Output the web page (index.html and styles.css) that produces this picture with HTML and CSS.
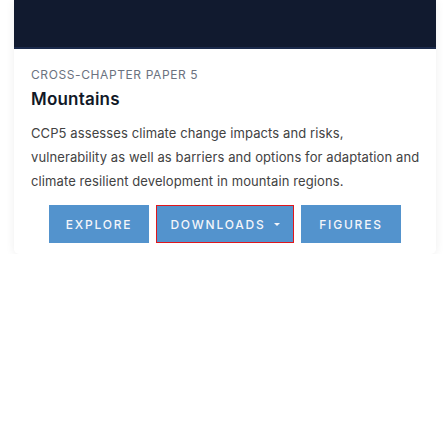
FILE: index.html
```html
<!DOCTYPE html>
<html>
<head>
<meta charset="utf-8">
<link rel="stylesheet" href="styles.css">
</head>
<body>
<div class="page">
  <div class="card">
    <div class="banner"></div>
    <div class="content">
      <div class="eyebrow">CROSS-CHAPTER PAPER 5</div>
      <h2 class="title">Mountains</h2>
      <p class="desc">CCP5 assesses climate change impacts and risks, vulnerability as well as barriers and options for adaptation and climate resilient development in mountain regions.</p>
      <div class="actions">
        <a class="btn btn-explore">EXPLORE</a>
        <a class="btn btn-downloads">DOWNLOADS <span class="caret"></span></a>
        <a class="btn btn-figures">FIGURES</a>
      </div>
    </div>
  </div>
</div>
</body>
</html>
```
FILE: styles.css
```css
html, body {
  margin: 0;
  padding: 0;
  background: #ffffff;
}
body {
  font-family: Inter, "Liberation Sans", Arial, sans-serif;
}
.page {
  padding: 0 12px 0 14px;
}
.card {
  width: 422px;
  background: #ffffff;
  border-radius: 0 0 5px 5px;
  box-shadow: 0 1px 10px rgba(0, 0, 0, 0.07);
}
.banner {
  height: 47px;
  background: #111a2f;
  border-bottom: 2px solid #1b2a4b;
}
.content {
  padding: 18px 14px 11px 17px;
}
.eyebrow {
  font-size: 12px;
  line-height: 16px;
  color: #6b7280;
  letter-spacing: 0.6px;
}
.title {
  margin: 4px 0 0 0;
  font-size: 17px;
  line-height: 24px;
  font-weight: 600;
  color: #111827;
  letter-spacing: 0.2px;
}
.desc {
  margin: 10px 0 0 0;
  font-size: 13px;
  line-height: 24px;
  color: #424242;
  letter-spacing: 0.1px;
}
.actions {
  display: flex;
  justify-content: center;
  gap: 7px;
  margin-top: 12px;
  margin-right: 3px;
}
.btn {
  display: flex;
  align-items: center;
  justify-content: center;
  height: 38px;
  box-sizing: border-box;
  background: #5393cd;
  color: #f4f6fa;
  font-size: 12px;
  font-weight: 500;
  letter-spacing: 1.8px;
}
.btn-explore, .btn-figures {
  width: 100px;
}
.btn-downloads {
  width: 138px;
  border: 1px solid #e0161c;
}
.caret {
  display: inline-block;
  width: 0;
  height: 0;
  margin-left: 8px;
  border-left: 3px solid transparent;
  border-right: 3px solid transparent;
  border-top: 3px solid #f4f6fa;
}
```
